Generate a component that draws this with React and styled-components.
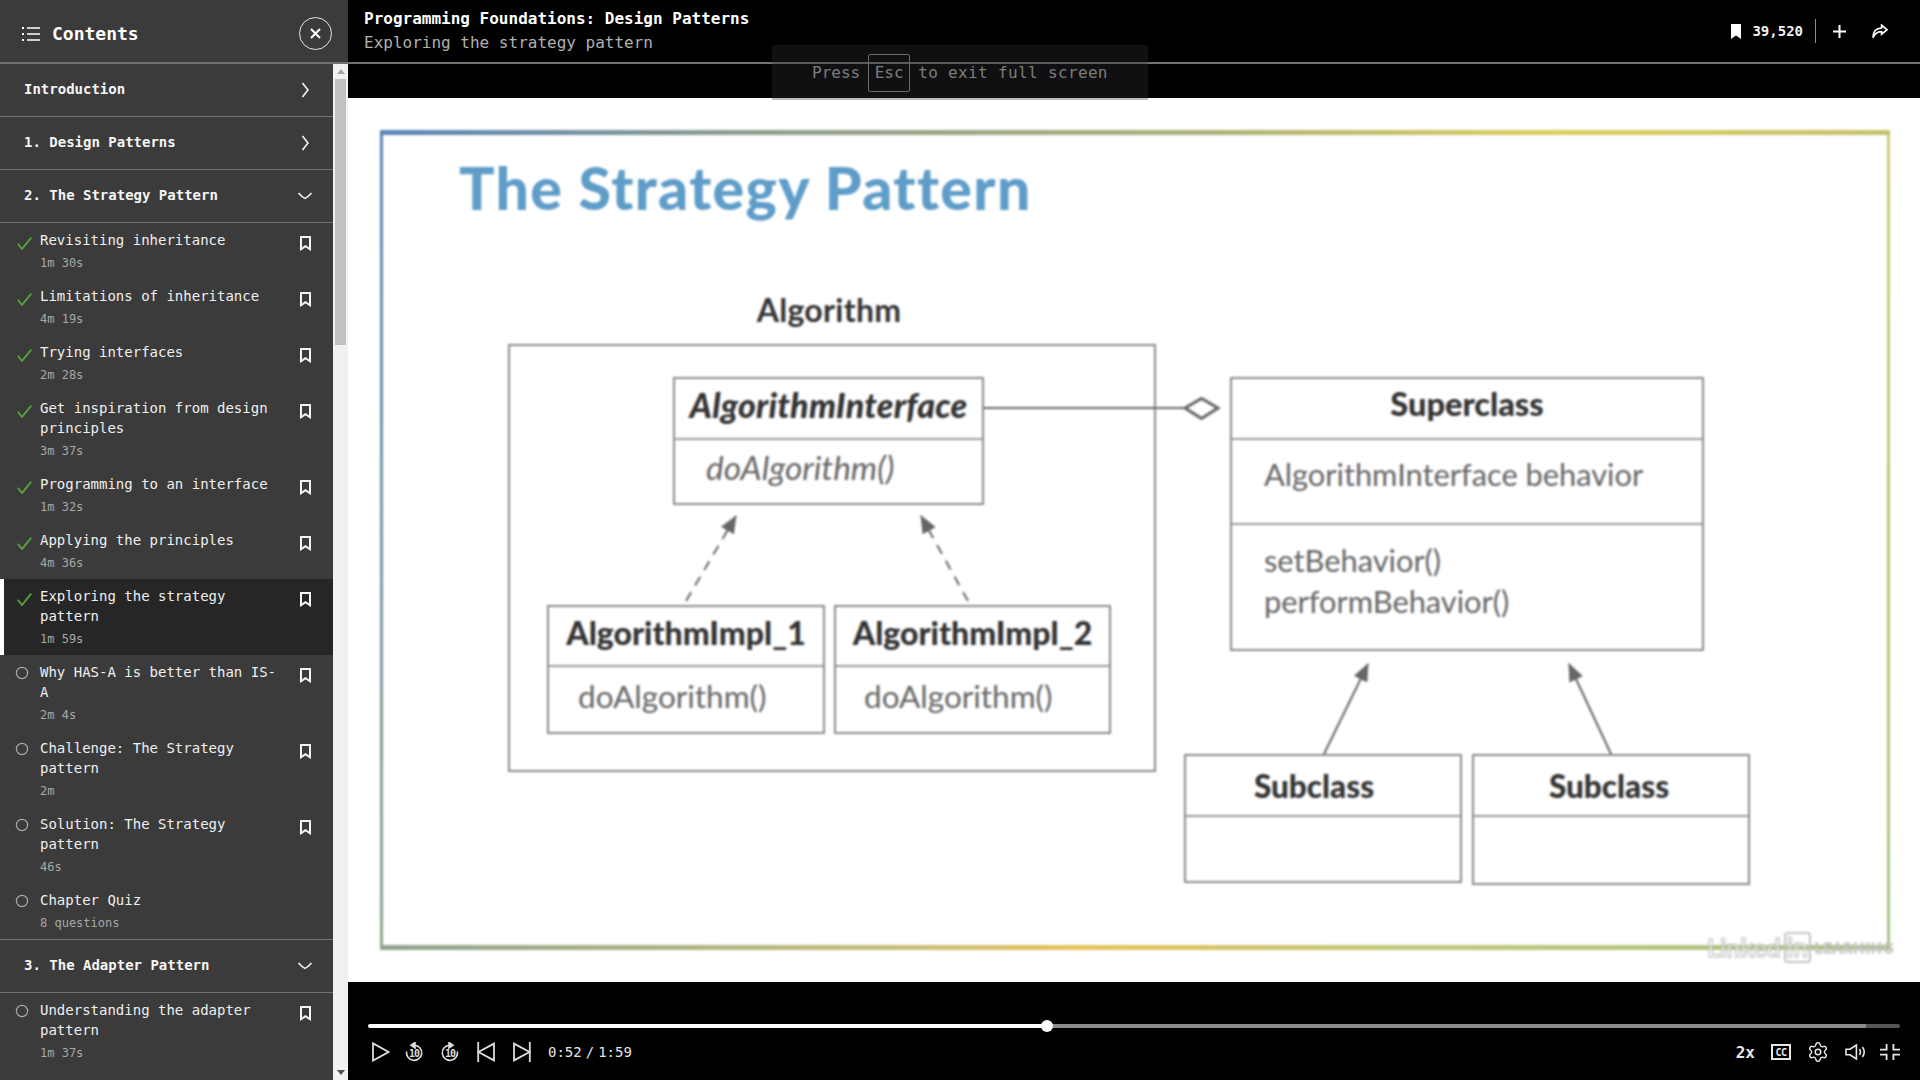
import React from 'react';
import styled, { createGlobalStyle } from 'styled-components';
import { Settings } from 'lucide-react';

const MONO = '"DejaVu Sans Mono", "Liberation Mono", monospace';
const SLIDE_FONT = 'Lato, "Open Sans", sans-serif';

const GlobalStyle = createGlobalStyle`
  html, body {
    margin: 0;
    padding: 0;
    height: 100%;
    overflow: hidden;
    background: #000;
    font-family: ${MONO};
  }
  * { box-sizing: border-box; }
`;

const Page = styled.div`
  position: relative;
  display: grid;
  grid-template-columns: 348px 1fr;
  width: 100vw;
  height: 100vh;
  overflow: hidden;
`;

/* ---------- sidebar ---------- */

const Sidebar = styled.aside`
  display: flex;
  flex-direction: column;
  height: 100%;
  background: #3b3b3b;
  color: #f2f2f2;
  overflow: hidden;
`;

const SidebarHead = styled.div`
  display: flex;
  align-items: center;
  flex: 0 0 64px;
  height: 64px;
  padding: 5px 16px 0 22px;
  border-bottom: 2px solid #707070;
`;

const SidebarTitle = styled.h1`
  flex: 1;
  margin: 0 0 0 12px;
  font-size: 18px;
  font-weight: 700;
  color: #fff;
`;

const CloseButton = styled.button`
  display: flex;
  align-items: center;
  justify-content: center;
  width: 33px;
  height: 33px;
  padding: 0;
  border: 1.5px solid #e6e6e6;
  border-radius: 50%;
  background: none;
`;

const SidebarBody = styled.div`
  display: grid;
  grid-template-columns: 333px 15px;
  flex: 1;
  min-height: 0;
`;

const List = styled.div`
  overflow: hidden;
`;

const SectionHead = styled.div`
  display: flex;
  align-items: center;
  justify-content: space-between;
  height: 53px;
  padding: 0 20px 0 24px;
  border-bottom: 1px solid #707070;
  font-size: 14px;
  font-weight: 700;
  color: #f5f5f5;
`;

const SectionName = styled.span`
  margin-top: -2px;
`;

const LessonGroup = styled.div`
  border-bottom: ${(p) => (p.$closed ? '1px solid #707070' : 'none')};
`;

const Row = styled.div`
  display: grid;
  grid-template-columns: 40px 240px 1fr;
  padding-bottom: 7px;
  background: ${(p) => (p.$active ? '#262626' : 'transparent')};
  box-shadow: ${(p) => (p.$active ? 'inset 4px 0 0 #fff' : 'none')};
`;

const RowText = styled.div`
  padding-top: 7px;
`;

const RowTitle = styled.div`
  font-size: 14px;
  line-height: 20px;
  color: #efefef;
`;

const RowMeta = styled.div`
  margin-top: 4px;
  font-size: 12px;
  line-height: 18px;
  color: #a8a8a8;
`;

const CheckMark = styled.svg`
  display: block;
  margin: 14px 0 0 17px;
`;

const OpenMark = styled.svg`
  display: block;
  margin: 11px 0 0 15px;
`;

const MarkButton = styled.svg`
  display: block;
  margin: 13px 0 0 20px;
`;

const ScrollTrack = styled.div`
  display: flex;
  flex-direction: column;
  align-items: center;
  height: 100%;
  background: #f1f1f1;
`;

const ScrollArrow = styled.div`
  flex: 0 0 5px;
  width: 0;
  height: 0;
  margin-top: ${(p) => (p.$down ? 'auto' : '5px')};
  margin-bottom: ${(p) => (p.$down ? '5px' : '0')};
  border-left: 4px solid transparent;
  border-right: 4px solid transparent;
  border-bottom: ${(p) => (p.$down ? '0' : '5px solid #a3a3a3')};
  border-top: ${(p) => (p.$down ? '5px solid #505050' : '0')};
`;

const ScrollThumb = styled.div`
  width: 11px;
  height: 266px;
  margin-top: 5px;
  background: #c1c1c1;
`;

/* ---------- main column ---------- */

const Main = styled.main`
  display: flex;
  flex-direction: column;
  height: 100%;
  min-width: 0;
  background: #000;
`;

const TopBar = styled.header`
  display: flex;
  align-items: center;
  justify-content: space-between;
  flex: 0 0 64px;
  padding: 0 32px 0 16px;
  border-bottom: 2px solid #707070;
`;

const CourseTitle = styled.div`
  font-size: 16px;
  line-height: 20px;
  font-weight: 700;
  color: #fff;
`;

const CourseLesson = styled.div`
  margin-top: 4px;
  font-size: 16px;
  line-height: 20px;
  color: #b0b0b0;
`;

const TopActions = styled.div`
  display: flex;
  align-items: center;
  color: #fff;
`;

const SaveCount = styled.span`
  margin-left: 11px;
  font-size: 14px;
  font-weight: 700;
  color: #f0f0f0;
`;

const ActionDivider = styled.span`
  width: 1px;
  height: 24px;
  margin: 0 17px 0 12px;
  background: #8a8a8a;
`;

const ShareIcon = styled.svg`
  margin-left: 26px;
`;

const Strip = styled.div`
  flex: 0 0 34px;
`;

const FullscreenToast = styled.div`
  position: absolute;
  top: 45px;
  left: 50%;
  display: flex;
  align-items: center;
  gap: 8px;
  width: 376px;
  height: 55px;
  padding-left: 40px;
  transform: translateX(-50%);
  background: rgba(48, 50, 54, 0.33);
  font-size: 16px;
  color: #7d7d7d;
`;

const Kbd = styled.kbd`
  display: flex;
  align-items: center;
  justify-content: center;
  width: 42px;
  height: 38px;
  border: 1px solid #6a6a6a;
  border-radius: 2px;
  font-family: inherit;
  font-size: 16px;
`;

const ToastHint = styled.span`
  letter-spacing: 0.35px;
`;

const Stage = styled.section`
  flex: 1;
  min-height: 0;
  padding: 32px 30px 32px 32px;
  background: #fff;
`;

/* ---------- the slide picture ---------- */

const Slide = styled.div`
  position: relative;
  width: 1510px;
  height: 820px;
  filter: blur(0.8px);
  font-family: ${SLIDE_FONT};
  background:
    linear-gradient(to right, #5b86b8, #8fa08e 25%, #aeb27a 55%, #dcd060 78%, #c5c26e) top / 100% 5px no-repeat,
    linear-gradient(to right, #8fa58f, #c8bf7a 35%, #e6c25c 46%, #c6c878 65%, #a8c486) bottom / 100% 5px no-repeat,
    linear-gradient(to bottom, #5b86b8, #8fa58f) left / 3px 100% no-repeat,
    linear-gradient(to bottom, #cdca78, #a8c486) right / 3px 100% no-repeat,
    #fff;
`;

const SlideTitle = styled.h2`
  position: absolute;
  left: 79px;
  top: 22px;
  margin: 0;
  font-size: 59px;
  line-height: 72px;
  font-weight: 900;
  letter-spacing: 1.35px;
  color: #5f9dc9;
  white-space: nowrap;
`;

const DiagramLabel = styled.div`
  position: absolute;
  left: 449px;
  top: 160px;
  transform: translateX(-50%);
  font-size: 32px;
  line-height: 40px;
  font-weight: 700;
  letter-spacing: 0.3px;
  color: #333;
`;

const Frame = styled.div`
  position: absolute;
  left: ${(p) => p.$x}px;
  top: ${(p) => p.$y}px;
  width: ${(p) => p.$w}px;
  height: ${(p) => p.$h}px;
  border: 2px solid #8a8a8a;
`;

const UmlBox = styled(Frame)`
  display: flex;
  flex-direction: column;
  background: #fff;
`;

const UmlHead = styled.div`
  display: flex;
  align-items: center;
  justify-content: center;
  flex: 0 0 ${(p) => p.$h || 60}px;
  padding-right: ${(p) => p.$shift || 0}px;
  padding-bottom: ${(p) => p.$up ?? 7}px;
  border-bottom: 2px solid #9a9a9a;
  font-size: ${(p) => p.$size || 32}px;
  font-weight: 900;
  font-style: ${(p) => (p.$italic ? 'italic' : 'normal')};
  letter-spacing: ${(p) => p.$track || 0}px;
  color: #333;
`;

const UmlPart = styled.div`
  flex: ${(p) => (p.$fixed ? `0 0 ${p.$fixed}px` : 1)};
  padding: ${(p) => p.$top || 0}px 0 0 ${(p) => p.$left || 30}px;
  border-bottom: ${(p) => (p.$fixed ? '2px solid #9a9a9a' : 'none')};
  font-size: ${(p) => p.$size || 30.8}px;
  line-height: 41px;
  font-style: ${(p) => (p.$italic ? 'italic' : 'normal')};
  color: #666;
  white-space: nowrap;
`;

const Connectors = styled.svg`
  position: absolute;
  inset: 0;
  width: 100%;
  height: 100%;
`;

const Watermark = styled.div`
  position: absolute;
  left: 1327px;
  top: 801px;
  display: flex;
  align-items: center;
  width: 200px;
  height: 32px;
  color: rgba(255, 255, 255, 0.5);
  -webkit-text-stroke: 1px #b6b6b6;
  font-weight: 700;
  white-space: nowrap;
`;

const WatermarkWord = styled.span`
  font-size: 25px;
`;

const WatermarkBadge = styled.span`
  display: flex;
  align-items: center;
  justify-content: center;
  width: 27px;
  height: 31px;
  margin-left: 3px;
  border: 2px solid #c4c4c4;
  border-radius: 4px;
  font-size: 26px;
`;

const WatermarkSmall = styled.span`
  margin-left: 4px;
  font-size: 14px;
  letter-spacing: 1.2px;
`;

/* ---------- player controls ---------- */

const Controls = styled.footer`
  flex: 0 0 98px;
  padding: 42px 20px 0;
  background: #000;
`;

const Track = styled.div`
  position: relative;
  height: 4px;
  background: linear-gradient(to right, #fff 0 679px, #8c8c8c 679px 1498px, #555 1498px);
  border-radius: 2px;
`;

const Knob = styled.span`
  position: absolute;
  left: 673px;
  top: -4px;
  width: 12px;
  height: 12px;
  border-radius: 50%;
  background: #fff;
`;

const ControlRow = styled.div`
  display: flex;
  align-items: center;
  height: 36px;
  margin-top: 6px;
  padding-left: 4px;
  gap: 18px;
  color: #dcdcdc;
`;

const PlayIcon = styled.svg`
  margin-right: -3px;
`;

const TimeLabel = styled.div`
  display: flex;
  align-items: center;
  margin-left: -1px;
  font-size: 14px;
  color: #e6e6e6;
`;

const TimeSlash = styled.span`
  margin: 0 4px;
`;

const RightControls = styled.div`
  display: flex;
  align-items: center;
  gap: 16px;
  margin-left: auto;
`;

const SpeedLabel = styled.span`
  font-size: 16px;
  font-weight: 700;
  color: #e6e6e6;
`;

const CcBadge = styled.span`
  display: flex;
  align-items: center;
  justify-content: center;
  width: 20px;
  height: 16px;
  border: 2px solid #e6e6e6;
  font-size: 10px;
  font-weight: 700;
  letter-spacing: -0.5px;
  color: #e6e6e6;
`;

const VolumeIcon = styled.svg`
  margin-right: -2px;
`;

/* ---------- icons ---------- */

const Chevron = ({ open }) =>
  open ? (
    <svg width="16" height="8" viewBox="0 0 16 8" fill="none" stroke="#f2f2f2" strokeWidth="1.6">
      <path d="M1.5 1 Q5 5 8 6.4 Q11 5 14.5 1" />
    </svg>
  ) : (
    <svg width="16" height="16" viewBox="0 0 16 16" fill="none" stroke="#f2f2f2" strokeWidth="1.6">
      <path d="M5.5 1 Q8.5 5 11 8 Q8.5 11 5.5 15" />
    </svg>
  );

const BookmarkOutline = () => (
  <MarkButton width="11" height="15" viewBox="0 0 11 15" fill="none" stroke="#f5f5f5" strokeWidth="2">
    <path d="M1 1h9v12.2l-4.5-3-4.5 3z" />
  </MarkButton>
);

const Check = () => (
  <CheckMark width="15" height="13" viewBox="0 0 15 13" fill="none" stroke="#58a53f" strokeWidth="1.8">
    <path d="M.8 6.8 L5 12 L14.2 .6" />
  </CheckMark>
);

const Circle = () => (
  <OpenMark width="14" height="14" viewBox="0 0 14 14" fill="none" stroke="#a8a8a8" strokeWidth="1.2">
    <circle cx="7" cy="7" r="5.6" />
  </OpenMark>
);

const Skip10 = ({ forward }) => (
  <svg
    width="18"
    height="20"
    viewBox="0 0 18 20"
    fill="none"
    stroke="currentColor"
    strokeWidth="1.6"
  >
    <g transform={forward ? 'matrix(-1 0 0 1 18 0)' : undefined}>
      <path d="M9.5 3.2 A7.6 7.6 0 1 1 1.6 9.5" />
      <path d="M10 .4 L6 3.2 L10 6 Z" fill="currentColor" />
    </g>
    <text
      x="9"
      y="15"
      textAnchor="middle"
      fontFamily={MONO}
      fontSize="10"
      fontWeight="700"
      fill="currentColor"
      stroke="none"
      letterSpacing="-1"
    >
      10
    </text>
  </svg>
);

const chapters = [
  { title: 'Revisiting inheritance', meta: '1m 30s', done: true },
  { title: 'Limitations of inheritance', meta: '4m 19s', done: true },
  { title: 'Trying interfaces', meta: '2m 28s', done: true },
  { title: 'Get inspiration from design principles', meta: '3m 37s', done: true },
  { title: 'Programming to an interface', meta: '1m 32s', done: true },
  { title: 'Applying the principles', meta: '4m 36s', done: true },
  { title: 'Exploring the strategy pattern', meta: '1m 59s', done: true, active: true },
  { title: 'Why HAS-A is better than IS-A', meta: '2m 4s' },
  { title: 'Challenge: The Strategy pattern', meta: '2m' },
  { title: 'Solution: The Strategy pattern', meta: '46s' },
  { title: 'Chapter Quiz', meta: '8 questions', quiz: true },
];

const adapterLessons = [
  { title: 'Understanding the adapter pattern', meta: '1m 37s' },
  { title: 'The adapter pattern defined' },
];

const Lesson = ({ title, meta, done, active, quiz }) => (
  <Row $active={active}>
    {done ? <Check /> : <Circle />}
    <RowText>
      <RowTitle>{title}</RowTitle>
      {meta && <RowMeta>{meta}</RowMeta>}
    </RowText>
    {!quiz && <BookmarkOutline />}
  </Row>
);

const App = () => (
  <Page>
    <GlobalStyle />
    <Sidebar>
      <SidebarHead>
        <svg width="18" height="14" viewBox="0 0 18 14" fill="#fff">
          <path d="M0 0h2v2H0zM0 6h2v2H0zM0 12h2v2H0zM5 .2h13v1.6H5zM5 6.2h13v1.6H5zM5 12.2h13v1.6H5z" />
        </svg>
        <SidebarTitle>Contents</SidebarTitle>
        <CloseButton aria-label="Close">
          <svg width="11" height="11" viewBox="0 0 11 11" stroke="#fff" strokeWidth="2">
            <path d="M1 1l9 9M10 1l-9 9" />
          </svg>
        </CloseButton>
      </SidebarHead>
      <SidebarBody>
        <List>
          <SectionHead>
            <SectionName>Introduction</SectionName>
            <Chevron />
          </SectionHead>
          <SectionHead>
            <SectionName>1. Design Patterns</SectionName>
            <Chevron />
          </SectionHead>
          <SectionHead>
            <SectionName>2. The Strategy Pattern</SectionName>
            <Chevron open />
          </SectionHead>
          <LessonGroup $closed>
            {chapters.map((c) => (
              <Lesson key={c.title} {...c} />
            ))}
          </LessonGroup>
          <SectionHead>
            <SectionName>3. The Adapter Pattern</SectionName>
            <Chevron open />
          </SectionHead>
          <LessonGroup>
            {adapterLessons.map((c) => (
              <Lesson key={c.title} {...c} />
            ))}
          </LessonGroup>
        </List>
        <ScrollTrack>
          <ScrollArrow />
          <ScrollThumb />
          <ScrollArrow $down />
        </ScrollTrack>
      </SidebarBody>
    </Sidebar>

    <Main>
      <TopBar>
        <div>
          <CourseTitle>Programming Foundations: Design Patterns</CourseTitle>
          <CourseLesson>Exploring the strategy pattern</CourseLesson>
        </div>
        <TopActions>
          <svg width="10" height="15" viewBox="0 0 10 15" fill="#fff">
            <path d="M0 0h10v15l-5-3.4L0 15z" />
          </svg>
          <SaveCount>39,520</SaveCount>
          <ActionDivider />
          <svg width="13" height="13" viewBox="0 0 13 13" stroke="#fff" strokeWidth="2">
            <path d="M6.5 0v13M0 6.5h13" />
          </svg>
          <ShareIcon width="16" height="15" viewBox="0 0 16 15" fill="none" stroke="#fff" strokeWidth="1.7">
            <path d="M9.6 1.2 L15 5.8 L9.6 10.2 V7.6 C5.6 7.4 3 9.2 1 13.6 C1 8 4 4.2 9.6 4 Z" />
          </ShareIcon>
        </TopActions>
      </TopBar>
      <Strip />
      <Stage>
        <Slide>
          <SlideTitle>The Strategy Pattern</SlideTitle>
          <DiagramLabel>Algorithm</DiagramLabel>
          <Frame $x={128} $y={214} $w={648} $h={428} />

          <Connectors viewBox="0 0 1510 820">
            <defs>
              <marker id="arrow" markerWidth="18" markerHeight="15" refX="17" refY="7.5" orient="auto" markerUnits="userSpaceOnUse">
                <path d="M0 0 L18 7.5 L0 15 Z" fill="#666" />
              </marker>
            </defs>
            <g fill="none" stroke="#666" strokeWidth="2">
              <path d="M603 278 H805" />
              <path d="M805 278 L821.5 268.5 L838 278 L821.5 288.5 Z" strokeWidth="3" fill="#fff" />
              <path d="M306 471 L356 386" strokeDasharray="10 8" markerEnd="url(#arrow)" />
              <path d="M588 471 L541 386" strokeDasharray="10 8" markerEnd="url(#arrow)" />
              <path d="M944 624 L988 534" markerEnd="url(#arrow)" />
              <path d="M1231 624 L1189 534" markerEnd="url(#arrow)" />
            </g>
          </Connectors>

          <UmlBox $x={293} $y={247} $w={311} $h={128}>
            <UmlHead $italic $h={61} $up={8} $size={34} $track={0.25}>AlgorithmInterface</UmlHead>
            <UmlPart $italic $top={7} $left={31} $size={33.4}>doAlgorithm()</UmlPart>
          </UmlBox>
          <UmlBox $x={167} $y={475} $w={278} $h={129}>
            <UmlHead $h={60} $size={32}>AlgorithmImpl_1</UmlHead>
            <UmlPart $top={9} $left={29} $size={31.5}>doAlgorithm()</UmlPart>
          </UmlBox>
          <UmlBox $x={454} $y={475} $w={277} $h={129}>
            <UmlHead $h={60} $size={32}>AlgorithmImpl_2</UmlHead>
            <UmlPart $top={9} $left={28} $size={31.5}>doAlgorithm()</UmlPart>
          </UmlBox>
          <UmlBox $x={850} $y={247} $w={474} $h={274}>
            <UmlHead $h={61} $up={10} $size={32.5}>Superclass</UmlHead>
            <UmlPart $fixed={85} $top={14} $left={32}>AlgorithmInterface behavior</UmlPart>
            <UmlPart $top={15} $left={32}>
              setBehavior()
              <br />
              performBehavior()
            </UmlPart>
          </UmlBox>
          <UmlBox $x={804} $y={624} $w={278} $h={129}>
            <UmlHead $h={61} $up={0} $size={31.5} $shift={18}>Subclass</UmlHead>
          </UmlBox>
          <UmlBox $x={1092} $y={624} $w={278} $h={131}>
            <UmlHead $h={61} $up={0} $size={31.5} $shift={4}>Subclass</UmlHead>
          </UmlBox>

          <Watermark>
            <WatermarkWord>Linked</WatermarkWord>
            <WatermarkBadge>in</WatermarkBadge>
            <WatermarkSmall>LEARNING</WatermarkSmall>
          </Watermark>
        </Slide>
      </Stage>
      <Controls>
        <Track>
          <Knob />
        </Track>
        <ControlRow>
          <PlayIcon width="18" height="20" viewBox="0 0 18 20" fill="none" stroke="currentColor" strokeWidth="1.8">
            <path d="M1 1.4 L16.6 10 L1 18.6 Z" />
          </PlayIcon>
          <Skip10 />
          <Skip10 forward />
          <svg width="18" height="20" viewBox="0 0 18 20" fill="none" stroke="currentColor" strokeWidth="1.8">
            <path d="M1.2 0v20" />
            <path d="M17 1.6 L1.4 10 L17 18.4 Z" />
          </svg>
          <svg width="18" height="20" viewBox="0 0 18 20" fill="none" stroke="currentColor" strokeWidth="1.8">
            <path d="M16.8 0v20" />
            <path d="M1 1.6 L16.6 10 L1 18.4 Z" />
          </svg>
          <TimeLabel>
            0:52
            <TimeSlash>/</TimeSlash>
            1:59
          </TimeLabel>
          <RightControls>
            <SpeedLabel>2x</SpeedLabel>
            <CcBadge>CC</CcBadge>
            <Settings size={22} strokeWidth={1.6} color="#e6e6e6" />
            <VolumeIcon width="21" height="16" viewBox="0 0 21 16" fill="none" stroke="#e6e6e6" strokeWidth="1.6">
              <path d="M1 5.2h4L11.4 1v14L5 10.8H1z" />
              <path d="M14.4 5c1.3 1.8 1.3 4.2 0 6M17.4 3c2.2 3 2.2 7 0 10" />
            </VolumeIcon>
            <svg width="20" height="16" viewBox="0 0 20 16" fill="none" stroke="#e6e6e6" strokeWidth="1.8">
              <path d="M0 5.6h6.6V0M13.4 0v5.6H20M0 10.6h6.6V16M13.4 16v-5.4H20" />
            </svg>
          </RightControls>
        </ControlRow>
      </Controls>
    </Main>

    <FullscreenToast>
      Press
      <Kbd>Esc</Kbd>
      <ToastHint>to exit full screen</ToastHint>
    </FullscreenToast>
  </Page>
);

export default App;
